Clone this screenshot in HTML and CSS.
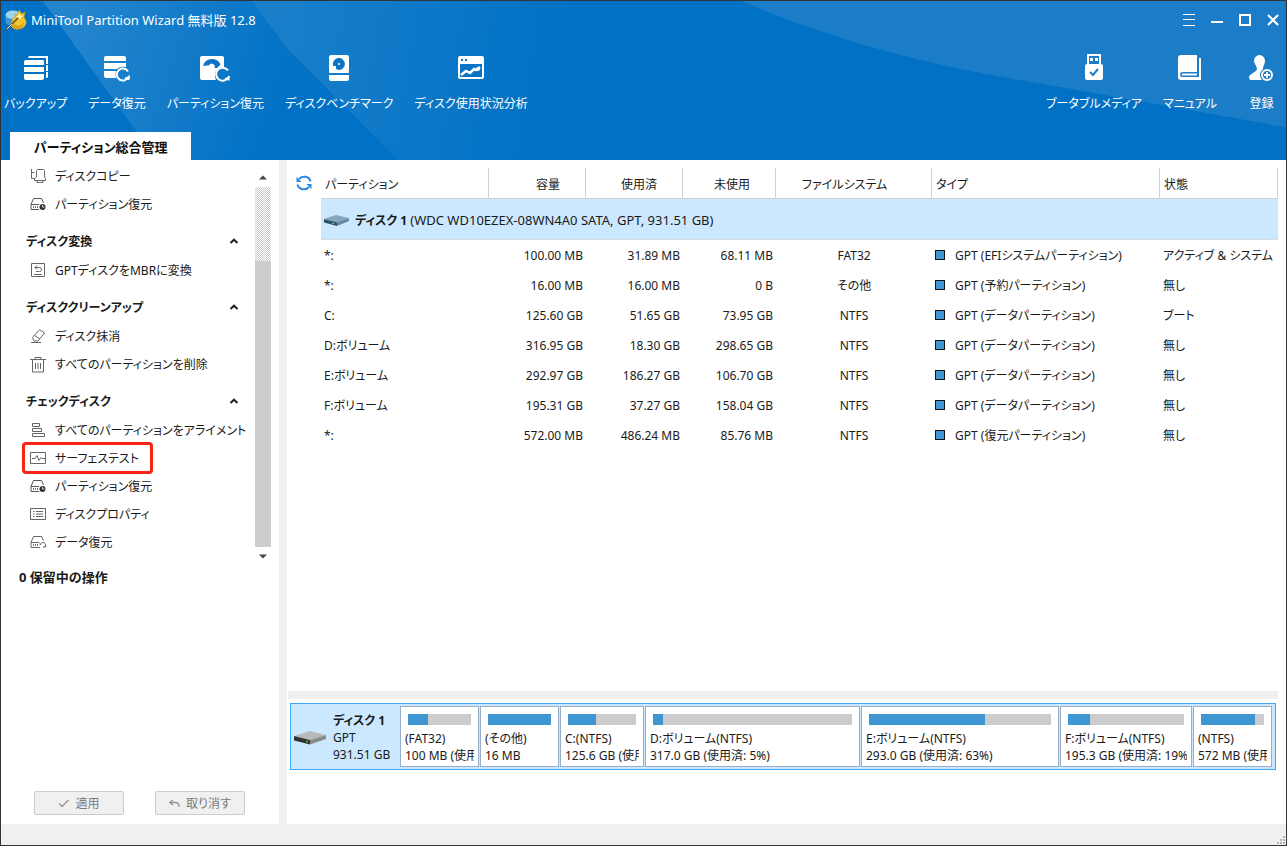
FILE: index.html
```html
<!DOCTYPE html>
<html lang="ja">
<head>
<meta charset="utf-8">
<title>MiniTool Partition Wizard 無料版 12.8</title>
<link rel="stylesheet" href="styles.css">
</head>
<body>
<svg class="defs" width="0" height="0" aria-hidden="true">
  <symbol id="i-recover" viewBox="0 0 16 14"><path d="M1 7.500 3.500 1.500h8l2 4.500M1 7.500v5h8M1 7.500h8" fill="none" stroke="#555"/><path d="M3 10h5" stroke="#777" stroke-width="2" stroke-dasharray="1 1"/><circle cx="12.500" cy="10" r="3" fill="#333"/><path d="M12.500 8v2h2" stroke="#fff" fill="none" stroke-width=".8"/></symbol>
  <symbol id="i-up" viewBox="0 0 10 6"><path d="M1.500 5 5 1.700 8.500 5" fill="none" stroke="#222" stroke-width="2"/></symbol>
</svg>
<div class="window">
  <header class="header">
    <svg class="beams" viewBox="0 0 600 160" aria-hidden="true">
      <defs>
        <linearGradient id="g1" gradientUnits="userSpaceOnUse" x1="70" y1="40" x2="290" y2="110"><stop offset="0" stop-color="#fff" stop-opacity=".14"/><stop offset="1" stop-color="#fff" stop-opacity="0"/></linearGradient>
        <linearGradient id="g2" gradientUnits="userSpaceOnUse" x1="270" y1="30" x2="570" y2="80"><stop offset="0" stop-color="#fff" stop-opacity=".1"/><stop offset="1" stop-color="#fff" stop-opacity="0"/></linearGradient>
      </defs>
      <path d="M42 0H253L290 50 400 160H157Z" fill="url(#g1)"/>
      <path d="M253 0H600V160H400L290 50Z" fill="url(#g2)"/>
    </svg>
    <svg class="swoosh" viewBox="0 0 550 160" aria-hidden="true"><path d="M2 0C90 38 190 65 292 81L550 127V0Z" fill="#1b7dc8"/></svg>
    <div class="titlebar">
      <svg class="logo" width="22" height="22" viewBox="0 0 22 22" aria-hidden="true"><ellipse cx="8" cy="6" rx="7.500" ry="4.500" fill="#9fd4ef"/><path d="M.5 6v7c1 3 5 4 8 4V10C5 10 1 9 .5 6Z" fill="#3f98cf"/><path d="M10 5 13 6 14 1 17 5 20 3 19 8 21 12c1 4-3 8-7 8-4 1-7-1-8-4 0-4 2-6 4-8Z" fill="#f4c52f" stroke="#c99a18" stroke-width=".7"/><path d="M9 14c1 3 6 4 10-1l-1 5c-3 3-8 3-11 0Z" fill="#d9a51c"/><path d="M1 21 15 7" stroke="#5d4a26" stroke-width="1.500"/><path d="M2 20 7 15" stroke="#e8edf0"/><path d="m14 4 1.200 2.200L18 7l-2.300 1.500L15 11l-1.500-2.200L11 8l2.200-1.500Z" fill="#fff5a9"/></svg>
      <h1 class="title">MiniTool Partition Wizard 無料版 12.8</h1>
      <div class="winctl">
        <button aria-label="メニュー"><svg width="12" height="12" viewBox="0 0 12 12"><path d="M0 .5h12M0 5.500h12M0 11.500h12" stroke="#fff"/></svg></button>
        <button aria-label="最小化"><svg width="12" height="12" viewBox="0 0 12 12"><path d="M0 8h12" stroke="#fff" stroke-width="2"/></svg></button>
        <button aria-label="最大化"><svg width="12" height="12" viewBox="0 0 12 12"><path d="M1 1h10v10H1Z" fill="none" stroke="#fff" stroke-width="2"/></svg></button>
        <button aria-label="閉じる"><svg width="12" height="12" viewBox="0 0 12 12"><path d="m1 1 10 10M11 1 1 11" stroke="#fff" stroke-width="2"/></svg></button>
      </div>
    </div>
    <nav class="toolbar">
      <button class="tool"><svg width="24" height="28" viewBox="0 -2 24 28"><path d="M4 2Q4 0 6 0H24V8H22V2H4ZM22 9h2v6h-2ZM22 16h2v5q0 1-2 1ZM0 6q0-2 2-2H19q1 0 1 2V9H0ZM0 11H20v5H0ZM0 18H20v4q0 2-2 2H2q-2 0-2-2Z" fill="#fff"/></svg><span>バックアップ</span></button>
      <button class="tool"><svg width="26" height="28" viewBox="0 -2 26 28"><path d="M0 2Q0 0 2 0H20q2 0 2 2V5H0ZM0 7H22V11Q16 10 13 13H0ZM0 15H12q-1 3 0 7H2q-2 0-2-2Z" fill="#fff"/><path d="M24 15.500A6 6 0 1 0 24.500 20.500M25.500 19.500l-1 3.500-3.500-1" fill="none" stroke="#fff" stroke-width="2"/></svg><span>データ復元</span></button>
      <button class="tool"><svg width="30" height="28" viewBox="0 -2 30 28"><path d="M0 2Q0 0 2 0H22q2 0 2 2v9q-5 0-8 4-2 4 0 9H2q-2 0-2-2Z" fill="#fff"/><path d="M3 10A9 8 0 0 1 20.500 8.500L17 12 14.500 12A3 3 0 0 0 9 9.500L6.500 9.500Z" fill="#0d73c4"/><circle cx="12" cy="11" r="1.500" fill="#fff"/><path d="M28 14.500A6.500 6.500 0 1 0 28.500 21M29 20l-.5 3.500-3.500-1" fill="none" stroke="#fff" stroke-width="2"/></svg><span>パーティション復元</span></button>
      <button class="tool"><svg width="20" height="28" viewBox="0 -1 20 28"><path d="M2 0H18q2 0 2 2V17q0 1-1 1H1q-1 0-1-1V2Q0 0 2 0ZM0 20H20v4q0 2-2 2H2q-2 0-2-2Z" fill="#fff"/><path d="M4 10A6 6 0 1 1 10 15L7 14V11H4Z" fill="#0d73c4"/><circle cx="10" cy="9" r="1" fill="#fff"/></svg><span>ディスクベンチマーク</span></button>
      <button class="tool"><svg width="26" height="28" viewBox="0 -2 26 28"><path d="M2 0H24q2 0 2 2V21q0 2-2 2H2q-2 0-2-2V2Q0 0 2 0Z" fill="#fff"/><path d="M3 3h2v2H3ZM7 3h2v2H7ZM2 8H24V21H2Z" fill="#0d73c4"/><path d="m3 19 5-4 4 2 4-4 2 1 4-3" fill="none" stroke="#fff" stroke-width="2.500"/><circle cx="20" cy="13" r="2" fill="#fff"/></svg><span>ディスク使用状況分析</span></button>
      <span class="spacer"></span>
      <button class="tool"><svg width="18" height="28" viewBox="0 0 18 28"><path d="M3 12V1H15V12" fill="none" stroke="#fff" stroke-width="2"/><path d="M5 4h3v3H5ZM10 4h3v3h-3ZM2 10H16q2 0 2 2V24q0 2-2 2H2q-2 0-2-2V12Q0 10 2 10Z" fill="#fff"/><path d="m5 18 3 3 5-6" fill="none" stroke="#1b7dc8" stroke-width="2"/></svg><span>ブータブルメディア</span></button>
      <button class="tool"><svg width="23" height="28" viewBox="0 -1 23 28"><path d="M3 0H19V17H4q-2 0-2 2.500T4 22H21V3h2V25H3q-3 0-3-3V3Q0 0 3 0ZM4 18.500H19V20.500H4Q3 19.500 4 18.500Z" fill="#fff"/></svg><span>マニュアル</span></button>
      <button class="tool account"><svg width="25" height="28" viewBox="0 -1 25 28"><path d="M5 6a5.500 6 0 0 1 11 0c0 3-2 5-2 7 0 3 3 3 3 6l-4 6H2Q0 25 0 22c0-3 8-5 8-8C8 11 5 9 5 6Z" fill="#fff"/><circle cx="18" cy="20" r="7" fill="#1b7dc8"/><circle cx="18" cy="20" r="5" fill="none" stroke="#fff" stroke-width="2"/><path d="M15 20h6M18 17v6" stroke="#fff" stroke-width="2"/></svg><span>登録</span></button>
    </nav>
    <div class="tabs"><button class="tab">パーティション総合管理</button></div>
  </header>

  <div class="body">
    <aside class="side">
      <div class="side-scroll">
        <div class="groups">
          <ul class="list">
            <li><button class="act"><svg width="16" height="16" viewBox="0 0 16 16"><path d="M1.500 1v9.500h3M1.500 4.500h3M6.500 2.500l1-1h6l1 1V9l1 1.500v2h-11v-2L6.500 9ZM7 12.500v2h6v-2" fill="none" stroke="#666"/></svg>ディスクコピー</button></li>
            <li><button class="act"><svg width="16" height="14"><use href="#i-recover"/></svg>パーティション復元</button></li>
          </ul>
          <section class="group">
            <h2><button class="head">ディスク変換<svg width="10" height="6"><use href="#i-up"/></svg></button></h2>
            <ul class="list">
              <li><button class="act"><svg width="16" height="16" viewBox="0 0 16 16"><path d="M1.500 1.500h13v13h-13ZM4 12.500h8M5 5.500h4.500q2 0 2 2t-2 2H6M7 3.500l-2 2 2 2" fill="none" stroke="#666"/></svg>GPTディスクをMBRに変換</button></li>
            </ul>
          </section>
          <section class="group">
            <h2><button class="head">ディスククリーンアップ<svg width="10" height="6"><use href="#i-up"/></svg></button></h2>
            <ul class="list">
              <li><button class="act"><svg width="16" height="16" viewBox="0 0 16 16"><path d="M9.500 1.500 14.500 5 8 13H4L2.500 9.500ZM4.500 7.500 10 11M1 14.500h10" fill="none" stroke="#666"/></svg>ディスク抹消</button></li>
              <li><button class="act"><svg width="16" height="17" viewBox="0 0 16 17"><path d="M0 3.500h16M5 3V1.500h6V3M2.500 4v12h11V4M5.500 7v6M8 7v6M10.500 7v6" fill="none" stroke="#666"/></svg>すべてのパーティションを削除</button></li>
            </ul>
          </section>
          <section class="group">
            <h2><button class="head">チェックディスク<svg width="10" height="6"><use href="#i-up"/></svg></button></h2>
            <ul class="list">
              <li><button class="act"><svg width="16" height="16" viewBox="0 0 16 16"><path d="M2.500 1.500h7v3h-7ZM2.500 6.500h9v3h-9ZM2.500 11.500h12v3h-12Z" fill="none" stroke="#666"/></svg>すべてのパーティションをアライメント</button></li>
              <li><button class="act marked"><svg width="16" height="14" viewBox="0 0 16 14"><path d="M.5 1.500h15v11H.5ZM2 7.500h3l2-3 2 5 2-3 1 1h3" fill="none" stroke="#666"/></svg>サーフェステスト</button></li>
              <li><button class="act"><svg width="16" height="14"><use href="#i-recover"/></svg>パーティション復元</button></li>
              <li><button class="act"><svg width="16" height="14" viewBox="0 0 16 14"><path d="M.5 1.500h15v11H.5ZM3 4.500h1.500M3 7h1.500M3 9.500h1.500M6 4.500h7M6 7h7M6 9.500h7" fill="none" stroke="#666"/></svg>ディスクプロパティ</button></li>
              <li><button class="act"><svg width="16" height="14" viewBox="0 0 16 14"><path d="M1 7.500 3.500 1.500h8l2 4M1 7.500v5h9M1 7.500h8M14.500 12a2.500 2.500 0 1 0-4-2l-1-1.500M13 12h2.500v-2" fill="none" stroke="#666"/><path d="M3 10h5" stroke="#777" stroke-width="2" stroke-dasharray="1 1"/></svg>データ復元</button></li>
            </ul>
          </section>
        </div>
        <div class="scrollbar" aria-hidden="true">
          <svg width="8" height="5" viewBox="0 0 8 5"><path d="M0 4.500 4 .5 8 4.500Z" fill="#444"/></svg>
          <span class="track"></span><span class="thumb"></span>
          <svg width="8" height="5" viewBox="0 0 8 5"><path d="M0 .5H8L4 4.500Z" fill="#444"/></svg>
        </div>
      </div>
      <h2 class="pending">0 保留中の操作</h2>
      <div class="buttons">
        <button class="btn" disabled><svg width="11" height="9" viewBox="0 0 11 9"><path d="m1 4.500 3 3L10.500 1" fill="none" stroke="#999" stroke-width="1.500"/></svg>適用</button>
        <button class="btn" disabled><svg width="11" height="9" viewBox="0 0 11 9"><path d="M4 1 1 3.500l3 2.500M1 3.500h5.500Q10 3.500 10 8" fill="none" stroke="#999" stroke-width="1.500"/></svg>取り消す</button>
      </div>
    </aside>
    <div class="splitter"></div>
    <main class="main">
      <div class="list-area">
        <button class="refresh" aria-label="更新"><svg width="16" height="16" viewBox="0 0 16 16"><path d="M14.500 6.500A6.500 6 0 0 0 3 4M1.500 9.500A6.500 6 0 0 0 13 12" fill="none" stroke="#2b8ade" stroke-width="2"/><path d="M.5 2v5h5ZM15.500 14V9h-5Z" fill="#2b8ade"/></svg></button>
        <table class="parts">
          <colgroup><col class="c-name"><col class="c-cap"><col class="c-used"><col class="c-free"><col class="c-fs"><col><col class="c-stat"></colgroup>
          <thead><tr><th>パーティション</th><th class="n">容量</th><th class="n">使用済</th><th class="n">未使用</th><th class="f">ファイルシステム</th><th>タイプ</th><th>状態</th></tr></thead>
          <tbody>
            <tr class="disk"><td colspan="7"><div class="disk-line"><svg width="25" height="12" viewBox="0 0 25 12"><path d="M0 5 12 1 25 4 13 9Z" fill="#86a8bf"/><path d="M0 5 13 8.500V12L0 8.500Z" fill="#31546b"/><path d="M13 8.500 25 4v3L13 12Z" fill="#6488a1"/><path d="M9 9v1" stroke="#55e080" stroke-width="2"/></svg><span><b>ディスク 1</b> <span class="model">(WDC WD10EZEX-08WN4A0 SATA, GPT, 931.51 GB)</span></span></div></td></tr>
            <tr><td>*:</td><td class="n">100.00 MB</td><td class="n">31.89 MB</td><td class="n">68.11 MB</td><td class="f">FAT32</td><td><i class="sq"></i>GPT (EFIシステムパーティション)</td><td>アクティブ &amp; システム</td></tr>
            <tr><td>*:</td><td class="n">16.00 MB</td><td class="n">16.00 MB</td><td class="n">0 B</td><td class="f">その他</td><td><i class="sq"></i>GPT (予約パーティション)</td><td>無し</td></tr>
            <tr><td>C:</td><td class="n">125.60 GB</td><td class="n">51.65 GB</td><td class="n">73.95 GB</td><td class="f">NTFS</td><td><i class="sq"></i>GPT (データパーティション)</td><td>ブート</td></tr>
            <tr><td>D:ボリューム</td><td class="n">316.95 GB</td><td class="n">18.30 GB</td><td class="n">298.65 GB</td><td class="f">NTFS</td><td><i class="sq"></i>GPT (データパーティション)</td><td>無し</td></tr>
            <tr><td>E:ボリューム</td><td class="n">292.97 GB</td><td class="n">186.27 GB</td><td class="n">106.70 GB</td><td class="f">NTFS</td><td><i class="sq"></i>GPT (データパーティション)</td><td>無し</td></tr>
            <tr><td>F:ボリューム</td><td class="n">195.31 GB</td><td class="n">37.27 GB</td><td class="n">158.04 GB</td><td class="f">NTFS</td><td><i class="sq"></i>GPT (データパーティション)</td><td>無し</td></tr>
            <tr><td>*:</td><td class="n">572.00 MB</td><td class="n">486.24 MB</td><td class="n">85.76 MB</td><td class="f">NTFS</td><td><i class="sq"></i>GPT (復元パーティション)</td><td>無し</td></tr>
          </tbody>
        </table>
      </div>
      <div class="hsplit"></div>
      <div class="map">
        <div class="map-disk">
          <svg width="32" height="14" viewBox="0 0 32 14"><path d="M0 5 16 0 32 4 16 9Z" fill="#b9b9b9"/><path d="M0 5 16 9v4.500L0 9.500Z" fill="#333"/><path d="M16 9 32 4v4l-16 5.500Z" fill="#8b8b8b"/><path d="M13 9.500v2" stroke="#45d13c" stroke-width="1.500"/></svg>
          <div><b>ディスク 1</b><br>GPT<br>931.51 GB</div>
        </div>
        <div class="cells">
          <div class="cell"><div class="bar"><span style="width:32%"></span></div><p>(FAT32)</p><p>100 MB (使用済: 31%)</p></div>
          <div class="cell"><div class="bar"><span style="width:100%"></span></div><p>(その他)</p><p>16 MB</p></div>
          <div class="cell"><div class="bar"><span style="width:41%"></span></div><p>C:(NTFS)</p><p>125.6 GB (使用済: 41%)</p></div>
          <div class="cell"><div class="bar"><span style="width:5%"></span></div><p>D:ボリューム(NTFS)</p><p>317.0 GB (使用済: 5%)</p></div>
          <div class="cell"><div class="bar"><span style="width:64%"></span></div><p>E:ボリューム(NTFS)</p><p>293.0 GB (使用済: 63%)</p></div>
          <div class="cell"><div class="bar"><span style="width:19%"></span></div><p>F:ボリューム(NTFS)</p><p>195.3 GB (使用済: 19%)</p></div>
          <div class="cell"><div class="bar"><span style="width:86%"></span></div><p>(NTFS)</p><p>572 MB (使用済: 85%)</p></div>
        </div>
      </div>
    </main>
  </div>
  <footer class="status"><svg width="9" height="9" viewBox="0 0 9 9" aria-hidden="true"><path d="M6 0h2v2H6ZM3 3h2v2H3ZM6 3h2v2H6ZM0 6h2v2H0ZM3 6h2v2H3ZM6 6h2v2H6Z" fill="#b5b5b5"/></svg></footer>
</div>
</body>
</html>
```

FILE: styles.css
```css
* { box-sizing: border-box; }
body { margin: 0; font: 12px/17px "Noto Sans", "Noto Sans CJK JP", sans-serif; font-feature-settings: "palt"; color: #1a1a1a; }
button { font: inherit; font-feature-settings: inherit; color: inherit; background: none; border: 0; padding: 0; white-space: nowrap; }
h1, h2, p, ul { margin: 0; padding: 0; font: inherit; }
ul { list-style: none; }
svg { display: block; flex: none; }
.defs { position: absolute; }

.window { min-height: 100vh; display: flex; flex-direction: column; border: 1px solid #333; background: #fff; }

.header { position: relative; display: flex; flex-direction: column; background: #0071c5; color: #fff; overflow: hidden; }
.beams, .swoosh { position: absolute; top: 0; height: 100%; }
.beams { left: 0; }
.swoosh { right: 0; }
.titlebar { position: relative; display: flex; align-items: center; height: 38px; padding: 0 7px 0 4px; gap: 4px; }
.title { flex: 1; font-size: 13px; }
.winctl { display: flex; gap: 16px; }
.toolbar { position: relative; display: flex; gap: 21px; height: 93px; padding: 15px 12px 0 3px; }
.tool { display: flex; flex-direction: column; align-items: center; gap: 13px; height: 58px; }
.account { margin-left: 11px; }
.spacer { flex: 1; }
.tabs { position: relative; display: flex; padding-left: 9px; }
.tab { height: 28px; padding: 2px 23px 0 24px; background: #fff; color: #111; font-weight: bold; font-size: 13px; }

.body { flex: 1; display: flex; }
.side { width: 278px; display: flex; flex-direction: column; }
.side-scroll { display: flex; padding-top: 2px; }
.groups { flex: 1; min-width: 0; padding-bottom: 3px; }
.group { margin-top: 8px; }
.list li { padding-left: 23px; height: 28px; }
.act { display: flex; align-items: center; gap: 9px; height: 28px; padding: 0 12px 0 6px; }
.marked { outline: 3px solid #fb2414; outline-offset: -1px; border-radius: 2px; }
.head { width: 100%; height: 30px; padding: 0 16px 0 25px; display: flex; align-items: center; justify-content: space-between; font-weight: bold; }
.scrollbar { width: 16px; margin-right: 8px; padding-top: 13px; display: flex; flex-direction: column; align-items: center; }
.scrollbar svg:first-child { margin-bottom: 7px; }
.track { width: 16px; height: 74px; background: repeating-conic-gradient(#ccc 0 25%, #fff 0 50%) 0 0 / 2px 2px; }
.thumb { width: 16px; flex: 1; margin-bottom: 7px; background: #cdcdcd; }
.pending { padding: 10px 18px; font-weight: bold; font-size: 13px; }
.buttons { margin-top: auto; display: flex; gap: 31px; padding: 0 0 9px 33px; }
.btn { width: 90px; height: 24px; display: flex; align-items: center; justify-content: center; gap: 6px; background: #f0f0f0; border: 1px solid #ccc; border-radius: 2px; color: #7a7a7a; }
.splitter { width: 8px; background: #f0f0f0; }

.main { flex: 1; min-width: 0; display: flex; flex-direction: column; padding-right: 8px; }
.list-area { flex: 1; display: flex; padding-top: 8px; }
.refresh { width: 34px; height: 30px; padding-left: 9px; }
.parts { flex: 1; table-layout: fixed; border-collapse: separate; border-spacing: 0; align-self: flex-start; width: 100%; }
.c-name { width: 168px; }
.c-cap, .c-used { width: 97px; }
.c-free { width: 93px; }
.c-fs { width: 156px; }
.c-stat { width: 118px; }
.parts th { height: 31px; padding: 2px 4px 0; text-align: left; font-weight: normal; border-right: 1px solid #d0d0d0; border-bottom: 1px solid #d0d0d0; }
.parts th.n { padding-right: 25px; }
.parts th.f { padding-left: 26px; }
.parts td { height: 30px; padding: 0 3px; white-space: nowrap; }
.parts .n { text-align: right; }
.parts td.f { text-align: center; }
.parts .disk td { height: 41px; padding: 2px 3px 0; background: #cce8ff; border-bottom: 1px solid #d5dde4; }
.disk-line { display: flex; align-items: center; gap: 6px; }
.model { font-size: 13px; }
.sq { display: inline-block; width: 10px; height: 10px; margin-right: 10px; background: #3e97d3; border: 1px solid #111; }

.hsplit { height: 8px; background: #f0f0f0; margin-left: 1px; }
.map { display: flex; margin: 4px 2px 54px 3px; padding: 2px 3px 2px 0; border: 1px solid #3ea5f7; background: #cce8ff; }
.map-disk { width: 109px; display: flex; align-items: center; gap: 7px; padding: 2px 0 0 3px; white-space: nowrap; }
.cells { flex: 1; min-width: 0; display: grid; gap: 1px; grid-template-columns: 79fr 79fr 84fr 215fr 198fr 132fr 79fr; }
.cell { min-width: 0; padding: 7px 4px 2px; background: #fff; border: 1px solid #98aecb; }
.cell p { overflow: hidden; white-space: nowrap; }
.bar { height: 11px; margin: 0 3px 5px; background: #ccc; }
.bar span { display: block; height: 100%; background: #3e97d3; }
.status { height: 21px; background: #f0f0f0; display: flex; justify-content: flex-end; align-items: flex-end; }
```
